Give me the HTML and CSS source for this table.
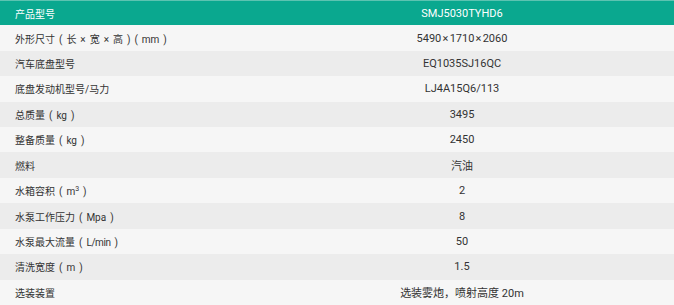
FILE: index.html
```html
<!DOCTYPE html>
<html lang="zh">
<head>
<meta charset="utf-8">
<link rel="stylesheet" href="styles.css">
</head>
<body>
<div class="spec">
  <div class="row head"><div class="k">产品型号</div><div class="v">SMJ5030TYHD6</div></div>
  <div class="row"><div class="k">外形尺寸 ( 长 × 宽 × 高 ) ( mm )</div><div class="v dim">5490 × 1710 × 2060</div></div>
  <div class="row"><div class="k">汽车底盘型号</div><div class="v">EQ1035SJ16QC</div></div>
  <div class="row"><div class="k">底盘发动机型号/马力</div><div class="v">LJ4A15Q6/113</div></div>
  <div class="row"><div class="k">总质量 ( kg )</div><div class="v">3495</div></div>
  <div class="row"><div class="k">整备质量 ( kg )</div><div class="v">2450</div></div>
  <div class="row"><div class="k">燃料</div><div class="v">汽油</div></div>
  <div class="row"><div class="k">水箱容积 ( m<sup>3</sup> )</div><div class="v">2</div></div>
  <div class="row"><div class="k">水泵工作压力 ( Mpa )</div><div class="v">8</div></div>
  <div class="row"><div class="k">水泵最大流量 ( <span class="tight">L/min</span> )</div><div class="v">50</div></div>
  <div class="row"><div class="k">清洗宽度 ( m )</div><div class="v">1.5</div></div>
  <div class="row"><div class="k">选装装置</div><div class="v">选装雾炮，喷射高度 20m</div></div>
</div>
</body>
</html>
```
FILE: styles.css
```css
html, body {
  margin: 0;
  padding: 0;
  background: #f6f6f6;
}
.spec {
  width: 674px;
  height: 305px;
  display: grid;
  grid-template-rows: repeat(12, 1fr);
  font-family: Roboto, "Noto Sans CJK SC", sans-serif;
  font-size: 11px;
  color: #333;
}
.row {
  display: grid;
  grid-template-columns: 250px 1fr;
  align-items: center;
  background: #f6f6f6;
}
.row:nth-child(odd) {
  background: #ececec;
}
.row.head {
  background: #0aa88f;
  color: #fff;
  border-top: 1px solid #5cc3b1;
}
.k {
  padding-left: 15px;
  white-space: nowrap;
  font-size: 10px;
  word-spacing: 1.5px;
}
.tight {
  letter-spacing: -0.4px;
}
.v {
  text-align: center;
  white-space: nowrap;
}
.v.dim {
  word-spacing: -1.5px;
}
sup {
  font-size: 7px;
  line-height: 0;
}
```
